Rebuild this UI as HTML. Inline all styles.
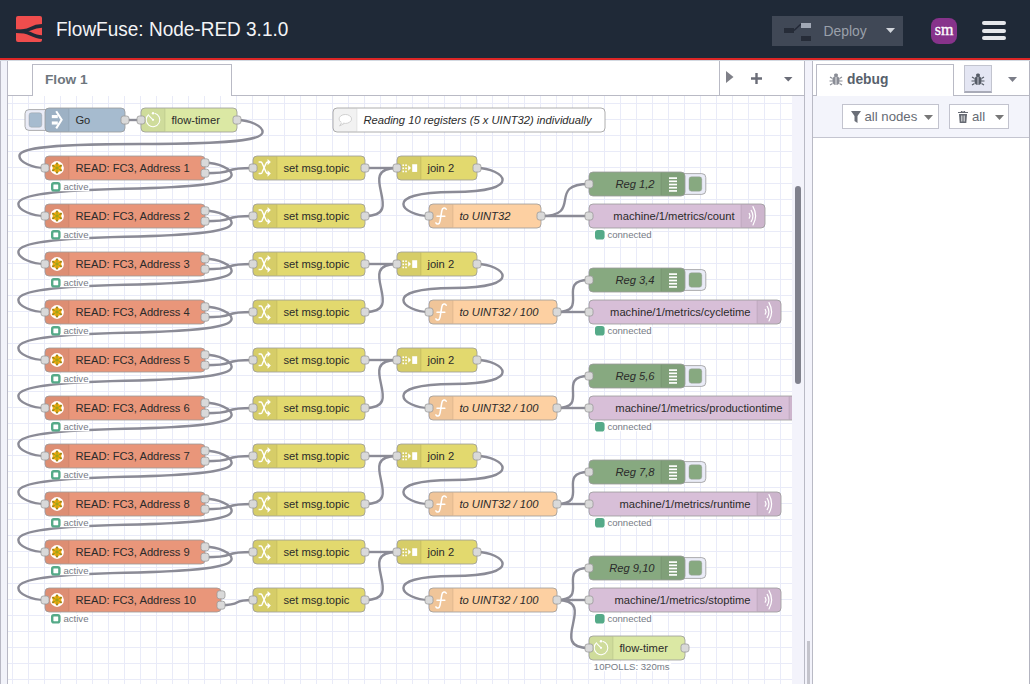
<!DOCTYPE html>
<html><head><meta charset="utf-8">
<style>
*{box-sizing:border-box;margin:0;padding:0}
html,body{width:1030px;height:684px;overflow:hidden;background:#fff;font-family:"Liberation Sans",sans-serif}
#hdr{position:absolute;left:0;top:0;width:1030px;height:58px;background:#1f2937}
#redline{position:absolute;left:0;top:58px;width:1030px;height:2px;background:#dc2626}
#title{position:absolute;left:56px;top:18px;font-size:19px;color:#f3f4f6;white-space:nowrap;letter-spacing:0;transform:scaleY(1.07);transform-origin:0 0}
#deploy{position:absolute;left:772px;top:16px;width:131px;height:30px;background:#404856}
#deploy .txt{position:absolute;left:51.5px;top:7px;font-size:13.9px;color:#9aa0aa}
#avatar{position:absolute;left:931px;top:18px;width:26px;height:26px;border-radius:8px;background:#87338b}
#avatar span{position:absolute;left:1px;top:3px;width:24px;text-align:center;font-family:"Liberation Serif",serif;font-size:16px;color:#fff;transform:scaleY(1.05);-webkit-text-stroke:0.3px #fff}
.bar{position:absolute;left:982px;width:24px;height:4px;border-radius:2px;background:#e5e7eb}
#lstrip{position:absolute;left:0;top:60px;width:8px;height:624px;background:#f2f3fa;border-left:1px solid #b8b8c4;border-right:1px solid #b8b8c4}
#tabbar{position:absolute;left:8px;top:60px;width:797px;height:36px;background:#fff;border-bottom:1px solid #b9bac5}
#tab1{position:absolute;left:32px;top:64px;width:200px;height:32px;background:#fff;border:1px solid #b9bac5;border-bottom:none}
#tab1 span{position:absolute;left:12px;top:6.5px;font-size:13.7px;font-weight:bold;color:#6d767d}
#tabctl{position:absolute;left:719px;top:60px;width:86px;height:36px;border-left:1px solid #b9bac5;border-right:1px solid #b9bac5;border-bottom:1px solid #b9bac5;background:#fff}
#sep{position:absolute;left:805px;top:60px;width:7px;height:624px;background:#f3f3fb}
#sbline{position:absolute;left:812px;top:60px;width:1px;height:624px;background:#b9bac5}
#sbline2{position:absolute;left:804px;top:96px;width:1px;height:588px;background:#b9bac5}
#sbhandle{position:absolute;left:807px;top:641px;width:3px;height:43px;background:#c4c4cc}
#sidebar{position:absolute;left:813px;top:60px;width:217px;height:624px;background:#fff}
#sbtabs{position:absolute;left:813px;top:60px;width:217px;height:36px;background:#fff;border-bottom:1px solid #b9bac5}
#dbgtab{position:absolute;left:816px;top:64px;width:138px;height:32px;background:#fff;border:1px solid #b9bac5;border-bottom:none}
#dbgtab span{position:absolute;left:30px;top:7.2px;font-size:13.8px;font-weight:bold;color:#58616c}
#dbgbtn{position:absolute;left:964px;top:65px;width:28px;height:28px;background:#e4e6f3;border:1px solid #c2c4cf;border-bottom:2px solid #a9abb8}
#sbtool{position:absolute;left:813px;top:96px;width:217px;height:42px;background:#f3f4fb;border-bottom:1px solid #c4c5d0}
.sbb{position:absolute;top:104px;height:25px;background:#fff;border:1px solid #c2c3ce}
.sbb span{position:absolute;top:4px;font-size:13.2px;color:#666b74}
#vtrack{position:absolute;left:792px;top:96px;width:12px;height:588px;background:#f3f3fb}
#vthumb{position:absolute;left:795px;top:186px;width:6px;height:198px;border-radius:3px;background:#80818d}
#canvas{position:absolute;left:0;top:0}
.lbl{font-family:"Liberation Sans",sans-serif;font-size:14px;fill:#2b2b2b}
.st{font-family:"Liberation Sans",sans-serif;font-size:12px;fill:#767b85}
.port{fill:#d9d9d9;stroke:#999;stroke-width:1}
</style></head><body>
<div id="hdr">
  <svg style="position:absolute;left:16px;top:16px" width="26" height="26" viewBox="0 0 26 26">
    <rect width="26" height="26" rx="2" fill="#ef4d4d"/>
    <path d="M0 15.3 C7 15.3 10 15 14 13 C18 11 21 9.9 26 9.9" fill="none" stroke="#1f2937" stroke-width="3.6"/>
    <path d="M0 15.3 C7 15.3 10 15.6 14 17.6 C18 19.6 21 21.1 26 21.1" fill="none" stroke="#1f2937" stroke-width="3.6"/>
  </svg>
  <div id="title">FlowFuse: Node-RED 3.1.0</div>
  <div id="deploy">
    <svg style="position:absolute;left:0;top:0" width="60" height="30">
      <rect x="12" y="12" width="10" height="5" fill="#262c38"/>
      <path d="M22 14.5 L29 8" stroke="#232937" stroke-width="1.5"/>
      <rect x="29" y="7" width="10" height="5" fill="#a1a8b5"/>
      <rect x="29" y="20" width="10" height="5" fill="#262c38"/>
    </svg>
    <div class="txt">Deploy</div>
    <svg style="position:absolute;left:114px;top:12px" width="10" height="6"><path d="M0 0 H9 L4.5 5 Z" fill="#d1d5db"/></svg>
  </div>
  <div id="avatar"><span>sm</span></div>
  <div class="bar" style="top:21px"></div>
  <div class="bar" style="top:28.5px"></div>
  <div class="bar" style="top:36px"></div>
</div>
<div id="redline"></div>
<div style="position:absolute;left:0;top:60px;width:1030px;height:1px;background:#d3d9e1;z-index:5"></div>
<div id="lstrip"></div>
<div id="tabbar"></div>
<div id="tab1"><span>Flow 1</span></div>
<div id="tabctl">
  <svg style="position:absolute;left:6px;top:11px" width="10" height="14"><path d="M0 0 L7.5 6 L0 12 Z" fill="#7f8088"/></svg>
  <svg style="position:absolute;left:30.5px;top:13px" width="12" height="12"><path d="M5.5 0 V11 M0 5.5 H11" stroke="#6b6d78" stroke-width="2.4"/></svg>
  <svg style="position:absolute;left:64px;top:17px" width="10" height="6"><path d="M0 0 H8.5 L4.25 4.5 Z" fill="#6b6d78"/></svg>
</div>
<svg id="canvas" width="1030" height="684" viewBox="0 0 1030 684" style="position:absolute;left:0;top:0">
  <defs><clipPath id="cc"><rect x="8" y="96" width="784" height="588"/></clipPath></defs>
  <g clip-path="url(#cc)"><rect x="8" y="96" width="784" height="588" fill="#fff"/><g fill="#e9ebf8"><rect x="12" y="96" width="1" height="588"/><rect x="28" y="96" width="1" height="588"/><rect x="44" y="96" width="1" height="588"/><rect x="60" y="96" width="1" height="588"/><rect x="76" y="96" width="1" height="588"/><rect x="92" y="96" width="1" height="588"/><rect x="108" y="96" width="1" height="588"/><rect x="124" y="96" width="1" height="588"/><rect x="140" y="96" width="1" height="588"/><rect x="156" y="96" width="1" height="588"/><rect x="172" y="96" width="1" height="588"/><rect x="188" y="96" width="1" height="588"/><rect x="204" y="96" width="1" height="588"/><rect x="220" y="96" width="1" height="588"/><rect x="236" y="96" width="1" height="588"/><rect x="252" y="96" width="1" height="588"/><rect x="268" y="96" width="1" height="588"/><rect x="284" y="96" width="1" height="588"/><rect x="300" y="96" width="1" height="588"/><rect x="316" y="96" width="1" height="588"/><rect x="332" y="96" width="1" height="588"/><rect x="348" y="96" width="1" height="588"/><rect x="364" y="96" width="1" height="588"/><rect x="380" y="96" width="1" height="588"/><rect x="396" y="96" width="1" height="588"/><rect x="412" y="96" width="1" height="588"/><rect x="428" y="96" width="1" height="588"/><rect x="444" y="96" width="1" height="588"/><rect x="460" y="96" width="1" height="588"/><rect x="476" y="96" width="1" height="588"/><rect x="492" y="96" width="1" height="588"/><rect x="508" y="96" width="1" height="588"/><rect x="524" y="96" width="1" height="588"/><rect x="540" y="96" width="1" height="588"/><rect x="556" y="96" width="1" height="588"/><rect x="572" y="96" width="1" height="588"/><rect x="588" y="96" width="1" height="588"/><rect x="604" y="96" width="1" height="588"/><rect x="620" y="96" width="1" height="588"/><rect x="636" y="96" width="1" height="588"/><rect x="652" y="96" width="1" height="588"/><rect x="668" y="96" width="1" height="588"/><rect x="684" y="96" width="1" height="588"/><rect x="700" y="96" width="1" height="588"/><rect x="716" y="96" width="1" height="588"/><rect x="732" y="96" width="1" height="588"/><rect x="748" y="96" width="1" height="588"/><rect x="764" y="96" width="1" height="588"/><rect x="780" y="96" width="1" height="588"/><rect x="8" y="103" width="784" height="1"/><rect x="8" y="119" width="784" height="1"/><rect x="8" y="135" width="784" height="1"/><rect x="8" y="151" width="784" height="1"/><rect x="8" y="167" width="784" height="1"/><rect x="8" y="183" width="784" height="1"/><rect x="8" y="199" width="784" height="1"/><rect x="8" y="215" width="784" height="1"/><rect x="8" y="231" width="784" height="1"/><rect x="8" y="247" width="784" height="1"/><rect x="8" y="263" width="784" height="1"/><rect x="8" y="279" width="784" height="1"/><rect x="8" y="295" width="784" height="1"/><rect x="8" y="311" width="784" height="1"/><rect x="8" y="327" width="784" height="1"/><rect x="8" y="343" width="784" height="1"/><rect x="8" y="359" width="784" height="1"/><rect x="8" y="375" width="784" height="1"/><rect x="8" y="391" width="784" height="1"/><rect x="8" y="407" width="784" height="1"/><rect x="8" y="423" width="784" height="1"/><rect x="8" y="439" width="784" height="1"/><rect x="8" y="455" width="784" height="1"/><rect x="8" y="471" width="784" height="1"/><rect x="8" y="487" width="784" height="1"/><rect x="8" y="503" width="784" height="1"/><rect x="8" y="519" width="784" height="1"/><rect x="8" y="535" width="784" height="1"/><rect x="8" y="551" width="784" height="1"/><rect x="8" y="567" width="784" height="1"/><rect x="8" y="583" width="784" height="1"/><rect x="8" y="599" width="784" height="1"/><rect x="8" y="615" width="784" height="1"/><rect x="8" y="631" width="784" height="1"/><rect x="8" y="647" width="784" height="1"/><rect x="8" y="663" width="784" height="1"/><rect x="8" y="679" width="784" height="1"/></g><g transform="translate(13,24) scale(0.8)"><g fill="none" stroke="#8b8b96" stroke-width="3"><path d="M 140 120 C 155 120 145 120 160 120"/><path d="M 280 120 C 296 120 312 127.5 312 135 S 296 150 160 150 S 8 157.5 8 165 S 24 180 40 180"/><path d="M 240 173.5 C 256.65 173.5 273.3 181 273.3 188.5 S 256.65 203.5 140 206 S 6.7 217.5 6.7 225 S 23.35 240 40 240"/><path d="M 240 186.5 C 285.26 186.5 254.74 180 300 180"/><path d="M 440 180 C 470 180 450 180 480 180"/><path d="M 240 233.5 C 256.65 233.5 273.3 241 273.3 248.5 S 256.65 263.5 140 266 S 6.7 277.5 6.7 285 S 23.35 300 40 300"/><path d="M 240 246.5 C 285.26 246.5 254.74 240 300 240"/><path d="M 440 240 C 494.08 240 425.92 180 480 180"/><path d="M 240 293.5 C 256.65 293.5 273.3 301 273.3 308.5 S 256.65 323.5 140 326 S 6.7 337.5 6.7 345 S 23.35 360 40 360"/><path d="M 240 306.5 C 285.26 306.5 254.74 300 300 300"/><path d="M 440 300 C 470 300 450 300 480 300"/><path d="M 240 353.5 C 256.65 353.5 273.3 361 273.3 368.5 S 256.65 383.5 140 386 S 6.7 397.5 6.7 405 S 23.35 420 40 420"/><path d="M 240 366.5 C 285.26 366.5 254.74 360 300 360"/><path d="M 440 360 C 494.08 360 425.92 300 480 300"/><path d="M 240 413.5 C 256.65 413.5 273.3 421 273.3 428.5 S 256.65 443.5 140 446 S 6.7 457.5 6.7 465 S 23.35 480 40 480"/><path d="M 240 426.5 C 285.26 426.5 254.74 420 300 420"/><path d="M 440 420 C 470 420 450 420 480 420"/><path d="M 240 473.5 C 256.65 473.5 273.3 481 273.3 488.5 S 256.65 503.5 140 506 S 6.7 517.5 6.7 525 S 23.35 540 40 540"/><path d="M 240 486.5 C 285.26 486.5 254.74 480 300 480"/><path d="M 440 480 C 494.08 480 425.92 420 480 420"/><path d="M 240 533.5 C 256.65 533.5 273.3 541 273.3 548.5 S 256.65 563.5 140 566 S 6.7 577.5 6.7 585 S 23.35 600 40 600"/><path d="M 240 546.5 C 285.26 546.5 254.74 540 300 540"/><path d="M 440 540 C 470 540 450 540 480 540"/><path d="M 240 593.5 C 256.65 593.5 273.3 601 273.3 608.5 S 256.65 623.5 140 626 S 6.7 637.5 6.7 645 S 23.35 660 40 660"/><path d="M 240 606.5 C 285.26 606.5 254.74 600 300 600"/><path d="M 440 600 C 494.08 600 425.92 540 480 540"/><path d="M 240 653.5 C 256.65 653.5 273.3 661 273.3 668.5 S 256.65 683.5 140 686 S 6.7 697.5 6.7 705 S 23.35 720 40 720"/><path d="M 240 666.5 C 285.26 666.5 254.74 660 300 660"/><path d="M 440 660 C 470 660 450 660 480 660"/><path d="M 260 726.5 C 290.39 726.5 269.61 720 300 720"/><path d="M 440 720 C 494.08 720 425.92 660 480 660"/><path d="M 580 180 C 596 180 612 187.5 612 195 S 596 210 550 210 S 488 217.5 488 225 S 504 240 520 240"/><path d="M 660 240 C 714.08 240 665.92 200 720 200"/><path d="M 660 240 C 705 240 675 240 720 240"/><path d="M 580 300 C 596 300 612 307.5 612 315 S 596 330 550 330 S 488 337.5 488 345 S 504 360 520 360"/><path d="M 680 360 C 722.43 360 677.57 320 720 320"/><path d="M 680 360 C 710 360 690 360 720 360"/><path d="M 580 420 C 596 420 612 427.5 612 435 S 596 450 550 450 S 488 457.5 488 465 S 504 480 520 480"/><path d="M 680 480 C 722.43 480 677.57 440 720 440"/><path d="M 680 480 C 710 480 690 480 720 480"/><path d="M 580 540 C 596 540 612 547.5 612 555 S 596 570 550 570 S 488 577.5 488 585 S 504 600 520 600"/><path d="M 680 600 C 722.43 600 677.57 560 720 560"/><path d="M 680 600 C 710 600 690 600 720 600"/><path d="M 580 660 C 596 660 612 667.5 612 675 S 596 690 550 690 S 488 697.5 488 705 S 504 720 520 720"/><path d="M 680 720 C 722.43 720 677.57 680 720 680"/><path d="M 680 720 C 710 720 690 720 720 720"/><path d="M 680 720 C 734.08 720 665.92 780 720 780"/></g><g transform="translate(40,105)"><g transform="translate(-25,2)"><rect width="32" height="26" rx="5" ry="5" fill="#eaecf7" stroke="#999"/><rect x="5" y="4" width="16" height="18" rx="3" ry="3" fill="#a6bbcf" stroke="#999" stroke-opacity="0.5"/></g><rect width="100" height="30" rx="5" ry="5" fill="#a6bbcf" stroke="#999"/><path d="M5 0.5 H30 V29.5 H5 A4.5 4.5 0 0 1 0.5 25 V5 A4.5 4.5 0 0 1 5 0.5 Z" fill="#000" fill-opacity="0.05"/><path d="M30 1 V29" stroke="#000" stroke-opacity="0.1"/><g fill="#fff"><rect x="8.5" y="8.8" width="7.5" height="3.9"/><rect x="8.5" y="16.8" width="7.5" height="3.9"/><path d="M14 4 L20.8 14.75 L14 25.5" fill="none" stroke="#fff" stroke-width="2.6" stroke-linejoin="miter"/></g><text x="38" y="20.4" text-anchor="start" class="lbl">Go</text><rect x="95" y="10" width="10" height="10" rx="3" ry="3" class="port"/></g><g transform="translate(160,105)"><rect width="120" height="30" rx="5" ry="5" fill="#dbe8a4" stroke="#999"/><path d="M5 0.5 H30 V29.5 H5 A4.5 4.5 0 0 1 0.5 25 V5 A4.5 4.5 0 0 1 5 0.5 Z" fill="#000" fill-opacity="0.05"/><path d="M30 1 V29" stroke="#000" stroke-opacity="0.1"/><g fill="none" stroke="#fff" stroke-width="1.3"><path d="M17.06 6.55 A8.5 8.5 0 1 1 9.77 8.1"/><path d="M15 14.8 L9.6 9.2" stroke-width="1.3"/></g><circle cx="15" cy="6.5" r="1.5" fill="#fff"/><circle cx="15" cy="14.8" r="1.4" fill="#fff"/><text x="38" y="20.4" text-anchor="start" class="lbl">flow-timer</text><rect x="-5" y="10" width="10" height="10" rx="3" ry="3" class="port"/><rect x="115" y="10" width="10" height="10" rx="3" ry="3" class="port"/></g><g transform="translate(400,105)"><rect width="340" height="30" rx="5" ry="5" fill="#ffffff" stroke="#999"/><path d="M5 0.5 H30 V29.5 H5 A4.5 4.5 0 0 1 0.5 25 V5 A4.5 4.5 0 0 1 5 0.5 Z" fill="#000" fill-opacity="0.05"/><path d="M30 1 V29" stroke="#000" stroke-opacity="0.1"/><g fill="#fff" stroke="#cfcfcf" stroke-width="1.2"><path d="M11 18.3 L8.2 22.5 L14 19.4"/><ellipse cx="15.4" cy="13.7" rx="7.8" ry="5.6"/><path d="M10.6 17.6 L12.6 18.6" stroke="#fff" stroke-width="1.6"/></g><text x="38" y="20.4" text-anchor="start" class="lbl" font-style="italic">Reading 10 registers (5 x UINT32) individually</text></g><g transform="translate(40,165)"><rect width="200" height="30" rx="5" ry="5" fill="#e9967a" stroke="#999"/><path d="M5 0.5 H30 V29.5 H5 A4.5 4.5 0 0 1 0.5 25 V5 A4.5 4.5 0 0 1 5 0.5 Z" fill="#000" fill-opacity="0.05"/><path d="M30 1 V29" stroke="#000" stroke-opacity="0.1"/><circle cx="15" cy="15" r="8.6" fill="#fff"/><polygon points="15,7.7 17.6,10.5 21.32,11.35 20.2,15 21.32,18.65 17.6,19.5 15,22.3 12.4,19.5 8.68,18.65 9.8,15 8.68,11.35 12.4,10.5" fill="#f5a80e"/><g stroke="#98a418" stroke-width="1.2"><line x1="15" y1="9" x2="15" y2="21"/><line x1="20.2" y1="12" x2="9.8" y2="18"/><line x1="20.2" y1="18" x2="9.8" y2="12"/></g><circle cx="15" cy="9.3" r="0.95" fill="#4f8f2e" stroke="#d0701a" stroke-width="0.4"/><circle cx="19.94" cy="12.15" r="0.95" fill="#4f8f2e" stroke="#d0701a" stroke-width="0.4"/><circle cx="19.94" cy="17.85" r="0.95" fill="#4f8f2e" stroke="#d0701a" stroke-width="0.4"/><circle cx="15" cy="20.7" r="0.95" fill="#4f8f2e" stroke="#d0701a" stroke-width="0.4"/><circle cx="10.06" cy="17.85" r="0.95" fill="#4f8f2e" stroke="#d0701a" stroke-width="0.4"/><circle cx="10.06" cy="12.15" r="0.95" fill="#4f8f2e" stroke="#d0701a" stroke-width="0.4"/><text x="38" y="20.4" text-anchor="start" class="lbl">READ: FC3, Address 1</text><rect x="-5" y="10" width="10" height="10" rx="3" ry="3" class="port"/><rect x="195" y="3.5" width="10" height="10" rx="3" ry="3" class="port"/><rect x="195" y="16.5" width="10" height="10" rx="3" ry="3" class="port"/><g transform="translate(3,33)"><rect x="3" y="-1" width="49.35" height="12" fill="#fff"/><rect x="6" y="1" width="9" height="9" rx="2" ry="2" fill="#fff" stroke="#55aa88" stroke-width="3"/><text x="20" y="10" class="st">active</text></g></g><g transform="translate(300,165)"><rect width="140" height="30" rx="5" ry="5" fill="#e2d96e" stroke="#999"/><path d="M5 0.5 H30 V29.5 H5 A4.5 4.5 0 0 1 0.5 25 V5 A4.5 4.5 0 0 1 5 0.5 Z" fill="#000" fill-opacity="0.05"/><path d="M30 1 V29" stroke="#000" stroke-opacity="0.1"/><g fill="none" stroke="#fff" stroke-width="1.8"><path d="M7 7.6 H9.6 C10.5 7.6 10.9 8 11.3 8.8 L16.2 20 C16.7 21.3 17.3 21.9 18.8 21.9"/><path d="M7 21.9 H9.6 C10.5 21.9 10.9 21.5 11.3 20.7 L16.2 9.5 C16.7 8.2 17.3 7.6 18.8 7.6"/></g><g fill="#fff"><path d="M18.2 3.6 L22.3 7.6 L18.2 11.6 Z"/><path d="M18.2 17.9 L22.3 21.9 L18.2 25.9 Z"/></g><text x="38" y="20.4" text-anchor="start" class="lbl">set msg.topic</text><rect x="-5" y="10" width="10" height="10" rx="3" ry="3" class="port"/><rect x="135" y="10" width="10" height="10" rx="3" ry="3" class="port"/></g><g transform="translate(480,165)"><rect width="100" height="30" rx="5" ry="5" fill="#e2d96e" stroke="#999"/><path d="M5 0.5 H30 V29.5 H5 A4.5 4.5 0 0 1 0.5 25 V5 A4.5 4.5 0 0 1 5 0.5 Z" fill="#000" fill-opacity="0.05"/><path d="M30 1 V29" stroke="#000" stroke-opacity="0.1"/><g fill="#fff"><rect x="6.8" y="10.5" width="2" height="2"/><rect x="6.8" y="14.4" width="2" height="2"/><rect x="6.8" y="18.3" width="2" height="2"/><rect x="10.3" y="10.5" width="2" height="2"/><rect x="10.3" y="14.4" width="2" height="2"/><rect x="10.3" y="18.3" width="2" height="2"/><path d="M14 11.5 L17.5 15 L14 18.5 Z"/><rect x="19" y="10.3" width="6.2" height="9.6"/></g><text x="38" y="20.4" text-anchor="start" class="lbl">join 2</text><rect x="-5" y="10" width="10" height="10" rx="3" ry="3" class="port"/><rect x="95" y="10" width="10" height="10" rx="3" ry="3" class="port"/></g><g transform="translate(40,225)"><rect width="200" height="30" rx="5" ry="5" fill="#e9967a" stroke="#999"/><path d="M5 0.5 H30 V29.5 H5 A4.5 4.5 0 0 1 0.5 25 V5 A4.5 4.5 0 0 1 5 0.5 Z" fill="#000" fill-opacity="0.05"/><path d="M30 1 V29" stroke="#000" stroke-opacity="0.1"/><circle cx="15" cy="15" r="8.6" fill="#fff"/><polygon points="15,7.7 17.6,10.5 21.32,11.35 20.2,15 21.32,18.65 17.6,19.5 15,22.3 12.4,19.5 8.68,18.65 9.8,15 8.68,11.35 12.4,10.5" fill="#f5a80e"/><g stroke="#98a418" stroke-width="1.2"><line x1="15" y1="9" x2="15" y2="21"/><line x1="20.2" y1="12" x2="9.8" y2="18"/><line x1="20.2" y1="18" x2="9.8" y2="12"/></g><circle cx="15" cy="9.3" r="0.95" fill="#4f8f2e" stroke="#d0701a" stroke-width="0.4"/><circle cx="19.94" cy="12.15" r="0.95" fill="#4f8f2e" stroke="#d0701a" stroke-width="0.4"/><circle cx="19.94" cy="17.85" r="0.95" fill="#4f8f2e" stroke="#d0701a" stroke-width="0.4"/><circle cx="15" cy="20.7" r="0.95" fill="#4f8f2e" stroke="#d0701a" stroke-width="0.4"/><circle cx="10.06" cy="17.85" r="0.95" fill="#4f8f2e" stroke="#d0701a" stroke-width="0.4"/><circle cx="10.06" cy="12.15" r="0.95" fill="#4f8f2e" stroke="#d0701a" stroke-width="0.4"/><text x="38" y="20.4" text-anchor="start" class="lbl">READ: FC3, Address 2</text><rect x="-5" y="10" width="10" height="10" rx="3" ry="3" class="port"/><rect x="195" y="3.5" width="10" height="10" rx="3" ry="3" class="port"/><rect x="195" y="16.5" width="10" height="10" rx="3" ry="3" class="port"/><g transform="translate(3,33)"><rect x="3" y="-1" width="49.35" height="12" fill="#fff"/><rect x="6" y="1" width="9" height="9" rx="2" ry="2" fill="#fff" stroke="#55aa88" stroke-width="3"/><text x="20" y="10" class="st">active</text></g></g><g transform="translate(300,225)"><rect width="140" height="30" rx="5" ry="5" fill="#e2d96e" stroke="#999"/><path d="M5 0.5 H30 V29.5 H5 A4.5 4.5 0 0 1 0.5 25 V5 A4.5 4.5 0 0 1 5 0.5 Z" fill="#000" fill-opacity="0.05"/><path d="M30 1 V29" stroke="#000" stroke-opacity="0.1"/><g fill="none" stroke="#fff" stroke-width="1.8"><path d="M7 7.6 H9.6 C10.5 7.6 10.9 8 11.3 8.8 L16.2 20 C16.7 21.3 17.3 21.9 18.8 21.9"/><path d="M7 21.9 H9.6 C10.5 21.9 10.9 21.5 11.3 20.7 L16.2 9.5 C16.7 8.2 17.3 7.6 18.8 7.6"/></g><g fill="#fff"><path d="M18.2 3.6 L22.3 7.6 L18.2 11.6 Z"/><path d="M18.2 17.9 L22.3 21.9 L18.2 25.9 Z"/></g><text x="38" y="20.4" text-anchor="start" class="lbl">set msg.topic</text><rect x="-5" y="10" width="10" height="10" rx="3" ry="3" class="port"/><rect x="135" y="10" width="10" height="10" rx="3" ry="3" class="port"/></g><g transform="translate(520,225)"><rect width="140" height="30" rx="5" ry="5" fill="#fdd0a2" stroke="#999"/><path d="M5 0.5 H30 V29.5 H5 A4.5 4.5 0 0 1 0.5 25 V5 A4.5 4.5 0 0 1 5 0.5 Z" fill="#000" fill-opacity="0.05"/><path d="M30 1 V29" stroke="#000" stroke-opacity="0.1"/><g fill="none" stroke="#fff" stroke-width="1.9" stroke-linecap="round"><path d="M21.5 6.5 C20.5 4.2 16.6 4.2 16 8.5 L13.8 21.5 C13.2 25.8 9.8 25.8 8.6 23.5"/><path d="M10 15.2 H19.8"/></g><text x="38" y="20.4" text-anchor="start" class="lbl" font-style="italic">to UINT32</text><rect x="-5" y="10" width="10" height="10" rx="3" ry="3" class="port"/><rect x="135" y="10" width="10" height="10" rx="3" ry="3" class="port"/></g><g transform="translate(720,185)"><g transform="translate(114,2)"><rect width="32" height="26" rx="5" ry="5" fill="#eaecf7" stroke="#999"/><rect x="11" y="4" width="16" height="18" rx="3" ry="3" fill="#87a980" stroke="#999" stroke-opacity="0.5"/></g><rect width="120" height="30" rx="5" ry="5" fill="#87a980" stroke="#999"/><path d="M90 0.5 H115 A4.5 4.5 0 0 1 119.5 5 V25 A4.5 4.5 0 0 1 115 29.5 H90 Z" fill="#000" fill-opacity="0.05"/><path d="M90 1 V29" stroke="#000" stroke-opacity="0.1"/><g transform="translate(90,0)"><g fill="#fff"><rect x="10" y="6.6" width="10" height="2.1"/><rect x="10" y="10.6" width="10" height="2.1"/><rect x="10" y="14.6" width="10" height="2.1"/><rect x="10" y="18.6" width="10" height="2.1"/><rect x="10" y="22.6" width="10" height="2.1"/></g></g><text x="82" y="20.4" text-anchor="end" class="lbl" font-style="italic">Reg 1,2</text><rect x="-5" y="10" width="10" height="10" rx="3" ry="3" class="port"/></g><g transform="translate(720,225)"><rect width="220" height="30" rx="5" ry="5" fill="#d8bfd8" stroke="#999"/><path d="M190 0.5 H215 A4.5 4.5 0 0 1 219.5 5 V25 A4.5 4.5 0 0 1 215 29.5 H190 Z" fill="#000" fill-opacity="0.05"/><path d="M190 1 V29" stroke="#000" stroke-opacity="0.1"/><g transform="translate(190,0)"><g fill="none" stroke="#fff" stroke-width="1.5" stroke-linecap="round"><path d="M10.3 11.8 Q12.2 14.75 10.3 17.7"/><path d="M12.7 8 Q17.1 15 12.7 22"/><path d="M15 3.3 Q21.5 14.75 15 26.2"/></g></g><text x="182" y="20.4" text-anchor="end" class="lbl">machine/1/metrics/count</text><rect x="-5" y="10" width="10" height="10" rx="3" ry="3" class="port"/><g transform="translate(3,33)"><rect x="3" y="-1" width="73.38" height="12" fill="#fff"/><rect x="6" y="1" width="9" height="9" rx="2" ry="2" fill="#55aa88" stroke="#55aa88" stroke-width="3"/><text x="20" y="10" class="st">connected</text></g></g><g transform="translate(40,285)"><rect width="200" height="30" rx="5" ry="5" fill="#e9967a" stroke="#999"/><path d="M5 0.5 H30 V29.5 H5 A4.5 4.5 0 0 1 0.5 25 V5 A4.5 4.5 0 0 1 5 0.5 Z" fill="#000" fill-opacity="0.05"/><path d="M30 1 V29" stroke="#000" stroke-opacity="0.1"/><circle cx="15" cy="15" r="8.6" fill="#fff"/><polygon points="15,7.7 17.6,10.5 21.32,11.35 20.2,15 21.32,18.65 17.6,19.5 15,22.3 12.4,19.5 8.68,18.65 9.8,15 8.68,11.35 12.4,10.5" fill="#f5a80e"/><g stroke="#98a418" stroke-width="1.2"><line x1="15" y1="9" x2="15" y2="21"/><line x1="20.2" y1="12" x2="9.8" y2="18"/><line x1="20.2" y1="18" x2="9.8" y2="12"/></g><circle cx="15" cy="9.3" r="0.95" fill="#4f8f2e" stroke="#d0701a" stroke-width="0.4"/><circle cx="19.94" cy="12.15" r="0.95" fill="#4f8f2e" stroke="#d0701a" stroke-width="0.4"/><circle cx="19.94" cy="17.85" r="0.95" fill="#4f8f2e" stroke="#d0701a" stroke-width="0.4"/><circle cx="15" cy="20.7" r="0.95" fill="#4f8f2e" stroke="#d0701a" stroke-width="0.4"/><circle cx="10.06" cy="17.85" r="0.95" fill="#4f8f2e" stroke="#d0701a" stroke-width="0.4"/><circle cx="10.06" cy="12.15" r="0.95" fill="#4f8f2e" stroke="#d0701a" stroke-width="0.4"/><text x="38" y="20.4" text-anchor="start" class="lbl">READ: FC3, Address 3</text><rect x="-5" y="10" width="10" height="10" rx="3" ry="3" class="port"/><rect x="195" y="3.5" width="10" height="10" rx="3" ry="3" class="port"/><rect x="195" y="16.5" width="10" height="10" rx="3" ry="3" class="port"/><g transform="translate(3,33)"><rect x="3" y="-1" width="49.35" height="12" fill="#fff"/><rect x="6" y="1" width="9" height="9" rx="2" ry="2" fill="#fff" stroke="#55aa88" stroke-width="3"/><text x="20" y="10" class="st">active</text></g></g><g transform="translate(300,285)"><rect width="140" height="30" rx="5" ry="5" fill="#e2d96e" stroke="#999"/><path d="M5 0.5 H30 V29.5 H5 A4.5 4.5 0 0 1 0.5 25 V5 A4.5 4.5 0 0 1 5 0.5 Z" fill="#000" fill-opacity="0.05"/><path d="M30 1 V29" stroke="#000" stroke-opacity="0.1"/><g fill="none" stroke="#fff" stroke-width="1.8"><path d="M7 7.6 H9.6 C10.5 7.6 10.9 8 11.3 8.8 L16.2 20 C16.7 21.3 17.3 21.9 18.8 21.9"/><path d="M7 21.9 H9.6 C10.5 21.9 10.9 21.5 11.3 20.7 L16.2 9.5 C16.7 8.2 17.3 7.6 18.8 7.6"/></g><g fill="#fff"><path d="M18.2 3.6 L22.3 7.6 L18.2 11.6 Z"/><path d="M18.2 17.9 L22.3 21.9 L18.2 25.9 Z"/></g><text x="38" y="20.4" text-anchor="start" class="lbl">set msg.topic</text><rect x="-5" y="10" width="10" height="10" rx="3" ry="3" class="port"/><rect x="135" y="10" width="10" height="10" rx="3" ry="3" class="port"/></g><g transform="translate(480,285)"><rect width="100" height="30" rx="5" ry="5" fill="#e2d96e" stroke="#999"/><path d="M5 0.5 H30 V29.5 H5 A4.5 4.5 0 0 1 0.5 25 V5 A4.5 4.5 0 0 1 5 0.5 Z" fill="#000" fill-opacity="0.05"/><path d="M30 1 V29" stroke="#000" stroke-opacity="0.1"/><g fill="#fff"><rect x="6.8" y="10.5" width="2" height="2"/><rect x="6.8" y="14.4" width="2" height="2"/><rect x="6.8" y="18.3" width="2" height="2"/><rect x="10.3" y="10.5" width="2" height="2"/><rect x="10.3" y="14.4" width="2" height="2"/><rect x="10.3" y="18.3" width="2" height="2"/><path d="M14 11.5 L17.5 15 L14 18.5 Z"/><rect x="19" y="10.3" width="6.2" height="9.6"/></g><text x="38" y="20.4" text-anchor="start" class="lbl">join 2</text><rect x="-5" y="10" width="10" height="10" rx="3" ry="3" class="port"/><rect x="95" y="10" width="10" height="10" rx="3" ry="3" class="port"/></g><g transform="translate(40,345)"><rect width="200" height="30" rx="5" ry="5" fill="#e9967a" stroke="#999"/><path d="M5 0.5 H30 V29.5 H5 A4.5 4.5 0 0 1 0.5 25 V5 A4.5 4.5 0 0 1 5 0.5 Z" fill="#000" fill-opacity="0.05"/><path d="M30 1 V29" stroke="#000" stroke-opacity="0.1"/><circle cx="15" cy="15" r="8.6" fill="#fff"/><polygon points="15,7.7 17.6,10.5 21.32,11.35 20.2,15 21.32,18.65 17.6,19.5 15,22.3 12.4,19.5 8.68,18.65 9.8,15 8.68,11.35 12.4,10.5" fill="#f5a80e"/><g stroke="#98a418" stroke-width="1.2"><line x1="15" y1="9" x2="15" y2="21"/><line x1="20.2" y1="12" x2="9.8" y2="18"/><line x1="20.2" y1="18" x2="9.8" y2="12"/></g><circle cx="15" cy="9.3" r="0.95" fill="#4f8f2e" stroke="#d0701a" stroke-width="0.4"/><circle cx="19.94" cy="12.15" r="0.95" fill="#4f8f2e" stroke="#d0701a" stroke-width="0.4"/><circle cx="19.94" cy="17.85" r="0.95" fill="#4f8f2e" stroke="#d0701a" stroke-width="0.4"/><circle cx="15" cy="20.7" r="0.95" fill="#4f8f2e" stroke="#d0701a" stroke-width="0.4"/><circle cx="10.06" cy="17.85" r="0.95" fill="#4f8f2e" stroke="#d0701a" stroke-width="0.4"/><circle cx="10.06" cy="12.15" r="0.95" fill="#4f8f2e" stroke="#d0701a" stroke-width="0.4"/><text x="38" y="20.4" text-anchor="start" class="lbl">READ: FC3, Address 4</text><rect x="-5" y="10" width="10" height="10" rx="3" ry="3" class="port"/><rect x="195" y="3.5" width="10" height="10" rx="3" ry="3" class="port"/><rect x="195" y="16.5" width="10" height="10" rx="3" ry="3" class="port"/><g transform="translate(3,33)"><rect x="3" y="-1" width="49.35" height="12" fill="#fff"/><rect x="6" y="1" width="9" height="9" rx="2" ry="2" fill="#fff" stroke="#55aa88" stroke-width="3"/><text x="20" y="10" class="st">active</text></g></g><g transform="translate(300,345)"><rect width="140" height="30" rx="5" ry="5" fill="#e2d96e" stroke="#999"/><path d="M5 0.5 H30 V29.5 H5 A4.5 4.5 0 0 1 0.5 25 V5 A4.5 4.5 0 0 1 5 0.5 Z" fill="#000" fill-opacity="0.05"/><path d="M30 1 V29" stroke="#000" stroke-opacity="0.1"/><g fill="none" stroke="#fff" stroke-width="1.8"><path d="M7 7.6 H9.6 C10.5 7.6 10.9 8 11.3 8.8 L16.2 20 C16.7 21.3 17.3 21.9 18.8 21.9"/><path d="M7 21.9 H9.6 C10.5 21.9 10.9 21.5 11.3 20.7 L16.2 9.5 C16.7 8.2 17.3 7.6 18.8 7.6"/></g><g fill="#fff"><path d="M18.2 3.6 L22.3 7.6 L18.2 11.6 Z"/><path d="M18.2 17.9 L22.3 21.9 L18.2 25.9 Z"/></g><text x="38" y="20.4" text-anchor="start" class="lbl">set msg.topic</text><rect x="-5" y="10" width="10" height="10" rx="3" ry="3" class="port"/><rect x="135" y="10" width="10" height="10" rx="3" ry="3" class="port"/></g><g transform="translate(520,345)"><rect width="160" height="30" rx="5" ry="5" fill="#fdd0a2" stroke="#999"/><path d="M5 0.5 H30 V29.5 H5 A4.5 4.5 0 0 1 0.5 25 V5 A4.5 4.5 0 0 1 5 0.5 Z" fill="#000" fill-opacity="0.05"/><path d="M30 1 V29" stroke="#000" stroke-opacity="0.1"/><g fill="none" stroke="#fff" stroke-width="1.9" stroke-linecap="round"><path d="M21.5 6.5 C20.5 4.2 16.6 4.2 16 8.5 L13.8 21.5 C13.2 25.8 9.8 25.8 8.6 23.5"/><path d="M10 15.2 H19.8"/></g><text x="38" y="20.4" text-anchor="start" class="lbl" font-style="italic">to UINT32 / 100</text><rect x="-5" y="10" width="10" height="10" rx="3" ry="3" class="port"/><rect x="155" y="10" width="10" height="10" rx="3" ry="3" class="port"/></g><g transform="translate(720,305)"><g transform="translate(114,2)"><rect width="32" height="26" rx="5" ry="5" fill="#eaecf7" stroke="#999"/><rect x="11" y="4" width="16" height="18" rx="3" ry="3" fill="#87a980" stroke="#999" stroke-opacity="0.5"/></g><rect width="120" height="30" rx="5" ry="5" fill="#87a980" stroke="#999"/><path d="M90 0.5 H115 A4.5 4.5 0 0 1 119.5 5 V25 A4.5 4.5 0 0 1 115 29.5 H90 Z" fill="#000" fill-opacity="0.05"/><path d="M90 1 V29" stroke="#000" stroke-opacity="0.1"/><g transform="translate(90,0)"><g fill="#fff"><rect x="10" y="6.6" width="10" height="2.1"/><rect x="10" y="10.6" width="10" height="2.1"/><rect x="10" y="14.6" width="10" height="2.1"/><rect x="10" y="18.6" width="10" height="2.1"/><rect x="10" y="22.6" width="10" height="2.1"/></g></g><text x="82" y="20.4" text-anchor="end" class="lbl" font-style="italic">Reg 3,4</text><rect x="-5" y="10" width="10" height="10" rx="3" ry="3" class="port"/></g><g transform="translate(720,345)"><rect width="240" height="30" rx="5" ry="5" fill="#d8bfd8" stroke="#999"/><path d="M210 0.5 H235 A4.5 4.5 0 0 1 239.5 5 V25 A4.5 4.5 0 0 1 235 29.5 H210 Z" fill="#000" fill-opacity="0.05"/><path d="M210 1 V29" stroke="#000" stroke-opacity="0.1"/><g transform="translate(210,0)"><g fill="none" stroke="#fff" stroke-width="1.5" stroke-linecap="round"><path d="M10.3 11.8 Q12.2 14.75 10.3 17.7"/><path d="M12.7 8 Q17.1 15 12.7 22"/><path d="M15 3.3 Q21.5 14.75 15 26.2"/></g></g><text x="202" y="20.4" text-anchor="end" class="lbl">machine/1/metrics/cycletime</text><rect x="-5" y="10" width="10" height="10" rx="3" ry="3" class="port"/><g transform="translate(3,33)"><rect x="3" y="-1" width="73.38" height="12" fill="#fff"/><rect x="6" y="1" width="9" height="9" rx="2" ry="2" fill="#55aa88" stroke="#55aa88" stroke-width="3"/><text x="20" y="10" class="st">connected</text></g></g><g transform="translate(40,405)"><rect width="200" height="30" rx="5" ry="5" fill="#e9967a" stroke="#999"/><path d="M5 0.5 H30 V29.5 H5 A4.5 4.5 0 0 1 0.5 25 V5 A4.5 4.5 0 0 1 5 0.5 Z" fill="#000" fill-opacity="0.05"/><path d="M30 1 V29" stroke="#000" stroke-opacity="0.1"/><circle cx="15" cy="15" r="8.6" fill="#fff"/><polygon points="15,7.7 17.6,10.5 21.32,11.35 20.2,15 21.32,18.65 17.6,19.5 15,22.3 12.4,19.5 8.68,18.65 9.8,15 8.68,11.35 12.4,10.5" fill="#f5a80e"/><g stroke="#98a418" stroke-width="1.2"><line x1="15" y1="9" x2="15" y2="21"/><line x1="20.2" y1="12" x2="9.8" y2="18"/><line x1="20.2" y1="18" x2="9.8" y2="12"/></g><circle cx="15" cy="9.3" r="0.95" fill="#4f8f2e" stroke="#d0701a" stroke-width="0.4"/><circle cx="19.94" cy="12.15" r="0.95" fill="#4f8f2e" stroke="#d0701a" stroke-width="0.4"/><circle cx="19.94" cy="17.85" r="0.95" fill="#4f8f2e" stroke="#d0701a" stroke-width="0.4"/><circle cx="15" cy="20.7" r="0.95" fill="#4f8f2e" stroke="#d0701a" stroke-width="0.4"/><circle cx="10.06" cy="17.85" r="0.95" fill="#4f8f2e" stroke="#d0701a" stroke-width="0.4"/><circle cx="10.06" cy="12.15" r="0.95" fill="#4f8f2e" stroke="#d0701a" stroke-width="0.4"/><text x="38" y="20.4" text-anchor="start" class="lbl">READ: FC3, Address 5</text><rect x="-5" y="10" width="10" height="10" rx="3" ry="3" class="port"/><rect x="195" y="3.5" width="10" height="10" rx="3" ry="3" class="port"/><rect x="195" y="16.5" width="10" height="10" rx="3" ry="3" class="port"/><g transform="translate(3,33)"><rect x="3" y="-1" width="49.35" height="12" fill="#fff"/><rect x="6" y="1" width="9" height="9" rx="2" ry="2" fill="#fff" stroke="#55aa88" stroke-width="3"/><text x="20" y="10" class="st">active</text></g></g><g transform="translate(300,405)"><rect width="140" height="30" rx="5" ry="5" fill="#e2d96e" stroke="#999"/><path d="M5 0.5 H30 V29.5 H5 A4.5 4.5 0 0 1 0.5 25 V5 A4.5 4.5 0 0 1 5 0.5 Z" fill="#000" fill-opacity="0.05"/><path d="M30 1 V29" stroke="#000" stroke-opacity="0.1"/><g fill="none" stroke="#fff" stroke-width="1.8"><path d="M7 7.6 H9.6 C10.5 7.6 10.9 8 11.3 8.8 L16.2 20 C16.7 21.3 17.3 21.9 18.8 21.9"/><path d="M7 21.9 H9.6 C10.5 21.9 10.9 21.5 11.3 20.7 L16.2 9.5 C16.7 8.2 17.3 7.6 18.8 7.6"/></g><g fill="#fff"><path d="M18.2 3.6 L22.3 7.6 L18.2 11.6 Z"/><path d="M18.2 17.9 L22.3 21.9 L18.2 25.9 Z"/></g><text x="38" y="20.4" text-anchor="start" class="lbl">set msg.topic</text><rect x="-5" y="10" width="10" height="10" rx="3" ry="3" class="port"/><rect x="135" y="10" width="10" height="10" rx="3" ry="3" class="port"/></g><g transform="translate(480,405)"><rect width="100" height="30" rx="5" ry="5" fill="#e2d96e" stroke="#999"/><path d="M5 0.5 H30 V29.5 H5 A4.5 4.5 0 0 1 0.5 25 V5 A4.5 4.5 0 0 1 5 0.5 Z" fill="#000" fill-opacity="0.05"/><path d="M30 1 V29" stroke="#000" stroke-opacity="0.1"/><g fill="#fff"><rect x="6.8" y="10.5" width="2" height="2"/><rect x="6.8" y="14.4" width="2" height="2"/><rect x="6.8" y="18.3" width="2" height="2"/><rect x="10.3" y="10.5" width="2" height="2"/><rect x="10.3" y="14.4" width="2" height="2"/><rect x="10.3" y="18.3" width="2" height="2"/><path d="M14 11.5 L17.5 15 L14 18.5 Z"/><rect x="19" y="10.3" width="6.2" height="9.6"/></g><text x="38" y="20.4" text-anchor="start" class="lbl">join 2</text><rect x="-5" y="10" width="10" height="10" rx="3" ry="3" class="port"/><rect x="95" y="10" width="10" height="10" rx="3" ry="3" class="port"/></g><g transform="translate(40,465)"><rect width="200" height="30" rx="5" ry="5" fill="#e9967a" stroke="#999"/><path d="M5 0.5 H30 V29.5 H5 A4.5 4.5 0 0 1 0.5 25 V5 A4.5 4.5 0 0 1 5 0.5 Z" fill="#000" fill-opacity="0.05"/><path d="M30 1 V29" stroke="#000" stroke-opacity="0.1"/><circle cx="15" cy="15" r="8.6" fill="#fff"/><polygon points="15,7.7 17.6,10.5 21.32,11.35 20.2,15 21.32,18.65 17.6,19.5 15,22.3 12.4,19.5 8.68,18.65 9.8,15 8.68,11.35 12.4,10.5" fill="#f5a80e"/><g stroke="#98a418" stroke-width="1.2"><line x1="15" y1="9" x2="15" y2="21"/><line x1="20.2" y1="12" x2="9.8" y2="18"/><line x1="20.2" y1="18" x2="9.8" y2="12"/></g><circle cx="15" cy="9.3" r="0.95" fill="#4f8f2e" stroke="#d0701a" stroke-width="0.4"/><circle cx="19.94" cy="12.15" r="0.95" fill="#4f8f2e" stroke="#d0701a" stroke-width="0.4"/><circle cx="19.94" cy="17.85" r="0.95" fill="#4f8f2e" stroke="#d0701a" stroke-width="0.4"/><circle cx="15" cy="20.7" r="0.95" fill="#4f8f2e" stroke="#d0701a" stroke-width="0.4"/><circle cx="10.06" cy="17.85" r="0.95" fill="#4f8f2e" stroke="#d0701a" stroke-width="0.4"/><circle cx="10.06" cy="12.15" r="0.95" fill="#4f8f2e" stroke="#d0701a" stroke-width="0.4"/><text x="38" y="20.4" text-anchor="start" class="lbl">READ: FC3, Address 6</text><rect x="-5" y="10" width="10" height="10" rx="3" ry="3" class="port"/><rect x="195" y="3.5" width="10" height="10" rx="3" ry="3" class="port"/><rect x="195" y="16.5" width="10" height="10" rx="3" ry="3" class="port"/><g transform="translate(3,33)"><rect x="3" y="-1" width="49.35" height="12" fill="#fff"/><rect x="6" y="1" width="9" height="9" rx="2" ry="2" fill="#fff" stroke="#55aa88" stroke-width="3"/><text x="20" y="10" class="st">active</text></g></g><g transform="translate(300,465)"><rect width="140" height="30" rx="5" ry="5" fill="#e2d96e" stroke="#999"/><path d="M5 0.5 H30 V29.5 H5 A4.5 4.5 0 0 1 0.5 25 V5 A4.5 4.5 0 0 1 5 0.5 Z" fill="#000" fill-opacity="0.05"/><path d="M30 1 V29" stroke="#000" stroke-opacity="0.1"/><g fill="none" stroke="#fff" stroke-width="1.8"><path d="M7 7.6 H9.6 C10.5 7.6 10.9 8 11.3 8.8 L16.2 20 C16.7 21.3 17.3 21.9 18.8 21.9"/><path d="M7 21.9 H9.6 C10.5 21.9 10.9 21.5 11.3 20.7 L16.2 9.5 C16.7 8.2 17.3 7.6 18.8 7.6"/></g><g fill="#fff"><path d="M18.2 3.6 L22.3 7.6 L18.2 11.6 Z"/><path d="M18.2 17.9 L22.3 21.9 L18.2 25.9 Z"/></g><text x="38" y="20.4" text-anchor="start" class="lbl">set msg.topic</text><rect x="-5" y="10" width="10" height="10" rx="3" ry="3" class="port"/><rect x="135" y="10" width="10" height="10" rx="3" ry="3" class="port"/></g><g transform="translate(520,465)"><rect width="160" height="30" rx="5" ry="5" fill="#fdd0a2" stroke="#999"/><path d="M5 0.5 H30 V29.5 H5 A4.5 4.5 0 0 1 0.5 25 V5 A4.5 4.5 0 0 1 5 0.5 Z" fill="#000" fill-opacity="0.05"/><path d="M30 1 V29" stroke="#000" stroke-opacity="0.1"/><g fill="none" stroke="#fff" stroke-width="1.9" stroke-linecap="round"><path d="M21.5 6.5 C20.5 4.2 16.6 4.2 16 8.5 L13.8 21.5 C13.2 25.8 9.8 25.8 8.6 23.5"/><path d="M10 15.2 H19.8"/></g><text x="38" y="20.4" text-anchor="start" class="lbl" font-style="italic">to UINT32 / 100</text><rect x="-5" y="10" width="10" height="10" rx="3" ry="3" class="port"/><rect x="155" y="10" width="10" height="10" rx="3" ry="3" class="port"/></g><g transform="translate(720,425)"><g transform="translate(114,2)"><rect width="32" height="26" rx="5" ry="5" fill="#eaecf7" stroke="#999"/><rect x="11" y="4" width="16" height="18" rx="3" ry="3" fill="#87a980" stroke="#999" stroke-opacity="0.5"/></g><rect width="120" height="30" rx="5" ry="5" fill="#87a980" stroke="#999"/><path d="M90 0.5 H115 A4.5 4.5 0 0 1 119.5 5 V25 A4.5 4.5 0 0 1 115 29.5 H90 Z" fill="#000" fill-opacity="0.05"/><path d="M90 1 V29" stroke="#000" stroke-opacity="0.1"/><g transform="translate(90,0)"><g fill="#fff"><rect x="10" y="6.6" width="10" height="2.1"/><rect x="10" y="10.6" width="10" height="2.1"/><rect x="10" y="14.6" width="10" height="2.1"/><rect x="10" y="18.6" width="10" height="2.1"/><rect x="10" y="22.6" width="10" height="2.1"/></g></g><text x="82" y="20.4" text-anchor="end" class="lbl" font-style="italic">Reg 5,6</text><rect x="-5" y="10" width="10" height="10" rx="3" ry="3" class="port"/></g><g transform="translate(720,465)"><rect width="280" height="30" rx="5" ry="5" fill="#d8bfd8" stroke="#999"/><path d="M250 0.5 H275 A4.5 4.5 0 0 1 279.5 5 V25 A4.5 4.5 0 0 1 275 29.5 H250 Z" fill="#000" fill-opacity="0.05"/><path d="M250 1 V29" stroke="#000" stroke-opacity="0.1"/><g transform="translate(250,0)"><g fill="none" stroke="#fff" stroke-width="1.5" stroke-linecap="round"><path d="M10.3 11.8 Q12.2 14.75 10.3 17.7"/><path d="M12.7 8 Q17.1 15 12.7 22"/><path d="M15 3.3 Q21.5 14.75 15 26.2"/></g></g><text x="242" y="20.4" text-anchor="end" class="lbl">machine/1/metrics/productiontime</text><rect x="-5" y="10" width="10" height="10" rx="3" ry="3" class="port"/><g transform="translate(3,33)"><rect x="3" y="-1" width="73.38" height="12" fill="#fff"/><rect x="6" y="1" width="9" height="9" rx="2" ry="2" fill="#55aa88" stroke="#55aa88" stroke-width="3"/><text x="20" y="10" class="st">connected</text></g></g><g transform="translate(40,525)"><rect width="200" height="30" rx="5" ry="5" fill="#e9967a" stroke="#999"/><path d="M5 0.5 H30 V29.5 H5 A4.5 4.5 0 0 1 0.5 25 V5 A4.5 4.5 0 0 1 5 0.5 Z" fill="#000" fill-opacity="0.05"/><path d="M30 1 V29" stroke="#000" stroke-opacity="0.1"/><circle cx="15" cy="15" r="8.6" fill="#fff"/><polygon points="15,7.7 17.6,10.5 21.32,11.35 20.2,15 21.32,18.65 17.6,19.5 15,22.3 12.4,19.5 8.68,18.65 9.8,15 8.68,11.35 12.4,10.5" fill="#f5a80e"/><g stroke="#98a418" stroke-width="1.2"><line x1="15" y1="9" x2="15" y2="21"/><line x1="20.2" y1="12" x2="9.8" y2="18"/><line x1="20.2" y1="18" x2="9.8" y2="12"/></g><circle cx="15" cy="9.3" r="0.95" fill="#4f8f2e" stroke="#d0701a" stroke-width="0.4"/><circle cx="19.94" cy="12.15" r="0.95" fill="#4f8f2e" stroke="#d0701a" stroke-width="0.4"/><circle cx="19.94" cy="17.85" r="0.95" fill="#4f8f2e" stroke="#d0701a" stroke-width="0.4"/><circle cx="15" cy="20.7" r="0.95" fill="#4f8f2e" stroke="#d0701a" stroke-width="0.4"/><circle cx="10.06" cy="17.85" r="0.95" fill="#4f8f2e" stroke="#d0701a" stroke-width="0.4"/><circle cx="10.06" cy="12.15" r="0.95" fill="#4f8f2e" stroke="#d0701a" stroke-width="0.4"/><text x="38" y="20.4" text-anchor="start" class="lbl">READ: FC3, Address 7</text><rect x="-5" y="10" width="10" height="10" rx="3" ry="3" class="port"/><rect x="195" y="3.5" width="10" height="10" rx="3" ry="3" class="port"/><rect x="195" y="16.5" width="10" height="10" rx="3" ry="3" class="port"/><g transform="translate(3,33)"><rect x="3" y="-1" width="49.35" height="12" fill="#fff"/><rect x="6" y="1" width="9" height="9" rx="2" ry="2" fill="#fff" stroke="#55aa88" stroke-width="3"/><text x="20" y="10" class="st">active</text></g></g><g transform="translate(300,525)"><rect width="140" height="30" rx="5" ry="5" fill="#e2d96e" stroke="#999"/><path d="M5 0.5 H30 V29.5 H5 A4.5 4.5 0 0 1 0.5 25 V5 A4.5 4.5 0 0 1 5 0.5 Z" fill="#000" fill-opacity="0.05"/><path d="M30 1 V29" stroke="#000" stroke-opacity="0.1"/><g fill="none" stroke="#fff" stroke-width="1.8"><path d="M7 7.6 H9.6 C10.5 7.6 10.9 8 11.3 8.8 L16.2 20 C16.7 21.3 17.3 21.9 18.8 21.9"/><path d="M7 21.9 H9.6 C10.5 21.9 10.9 21.5 11.3 20.7 L16.2 9.5 C16.7 8.2 17.3 7.6 18.8 7.6"/></g><g fill="#fff"><path d="M18.2 3.6 L22.3 7.6 L18.2 11.6 Z"/><path d="M18.2 17.9 L22.3 21.9 L18.2 25.9 Z"/></g><text x="38" y="20.4" text-anchor="start" class="lbl">set msg.topic</text><rect x="-5" y="10" width="10" height="10" rx="3" ry="3" class="port"/><rect x="135" y="10" width="10" height="10" rx="3" ry="3" class="port"/></g><g transform="translate(480,525)"><rect width="100" height="30" rx="5" ry="5" fill="#e2d96e" stroke="#999"/><path d="M5 0.5 H30 V29.5 H5 A4.5 4.5 0 0 1 0.5 25 V5 A4.5 4.5 0 0 1 5 0.5 Z" fill="#000" fill-opacity="0.05"/><path d="M30 1 V29" stroke="#000" stroke-opacity="0.1"/><g fill="#fff"><rect x="6.8" y="10.5" width="2" height="2"/><rect x="6.8" y="14.4" width="2" height="2"/><rect x="6.8" y="18.3" width="2" height="2"/><rect x="10.3" y="10.5" width="2" height="2"/><rect x="10.3" y="14.4" width="2" height="2"/><rect x="10.3" y="18.3" width="2" height="2"/><path d="M14 11.5 L17.5 15 L14 18.5 Z"/><rect x="19" y="10.3" width="6.2" height="9.6"/></g><text x="38" y="20.4" text-anchor="start" class="lbl">join 2</text><rect x="-5" y="10" width="10" height="10" rx="3" ry="3" class="port"/><rect x="95" y="10" width="10" height="10" rx="3" ry="3" class="port"/></g><g transform="translate(40,585)"><rect width="200" height="30" rx="5" ry="5" fill="#e9967a" stroke="#999"/><path d="M5 0.5 H30 V29.5 H5 A4.5 4.5 0 0 1 0.5 25 V5 A4.5 4.5 0 0 1 5 0.5 Z" fill="#000" fill-opacity="0.05"/><path d="M30 1 V29" stroke="#000" stroke-opacity="0.1"/><circle cx="15" cy="15" r="8.6" fill="#fff"/><polygon points="15,7.7 17.6,10.5 21.32,11.35 20.2,15 21.32,18.65 17.6,19.5 15,22.3 12.4,19.5 8.68,18.65 9.8,15 8.68,11.35 12.4,10.5" fill="#f5a80e"/><g stroke="#98a418" stroke-width="1.2"><line x1="15" y1="9" x2="15" y2="21"/><line x1="20.2" y1="12" x2="9.8" y2="18"/><line x1="20.2" y1="18" x2="9.8" y2="12"/></g><circle cx="15" cy="9.3" r="0.95" fill="#4f8f2e" stroke="#d0701a" stroke-width="0.4"/><circle cx="19.94" cy="12.15" r="0.95" fill="#4f8f2e" stroke="#d0701a" stroke-width="0.4"/><circle cx="19.94" cy="17.85" r="0.95" fill="#4f8f2e" stroke="#d0701a" stroke-width="0.4"/><circle cx="15" cy="20.7" r="0.95" fill="#4f8f2e" stroke="#d0701a" stroke-width="0.4"/><circle cx="10.06" cy="17.85" r="0.95" fill="#4f8f2e" stroke="#d0701a" stroke-width="0.4"/><circle cx="10.06" cy="12.15" r="0.95" fill="#4f8f2e" stroke="#d0701a" stroke-width="0.4"/><text x="38" y="20.4" text-anchor="start" class="lbl">READ: FC3, Address 8</text><rect x="-5" y="10" width="10" height="10" rx="3" ry="3" class="port"/><rect x="195" y="3.5" width="10" height="10" rx="3" ry="3" class="port"/><rect x="195" y="16.5" width="10" height="10" rx="3" ry="3" class="port"/><g transform="translate(3,33)"><rect x="3" y="-1" width="49.35" height="12" fill="#fff"/><rect x="6" y="1" width="9" height="9" rx="2" ry="2" fill="#fff" stroke="#55aa88" stroke-width="3"/><text x="20" y="10" class="st">active</text></g></g><g transform="translate(300,585)"><rect width="140" height="30" rx="5" ry="5" fill="#e2d96e" stroke="#999"/><path d="M5 0.5 H30 V29.5 H5 A4.5 4.5 0 0 1 0.5 25 V5 A4.5 4.5 0 0 1 5 0.5 Z" fill="#000" fill-opacity="0.05"/><path d="M30 1 V29" stroke="#000" stroke-opacity="0.1"/><g fill="none" stroke="#fff" stroke-width="1.8"><path d="M7 7.6 H9.6 C10.5 7.6 10.9 8 11.3 8.8 L16.2 20 C16.7 21.3 17.3 21.9 18.8 21.9"/><path d="M7 21.9 H9.6 C10.5 21.9 10.9 21.5 11.3 20.7 L16.2 9.5 C16.7 8.2 17.3 7.6 18.8 7.6"/></g><g fill="#fff"><path d="M18.2 3.6 L22.3 7.6 L18.2 11.6 Z"/><path d="M18.2 17.9 L22.3 21.9 L18.2 25.9 Z"/></g><text x="38" y="20.4" text-anchor="start" class="lbl">set msg.topic</text><rect x="-5" y="10" width="10" height="10" rx="3" ry="3" class="port"/><rect x="135" y="10" width="10" height="10" rx="3" ry="3" class="port"/></g><g transform="translate(520,585)"><rect width="160" height="30" rx="5" ry="5" fill="#fdd0a2" stroke="#999"/><path d="M5 0.5 H30 V29.5 H5 A4.5 4.5 0 0 1 0.5 25 V5 A4.5 4.5 0 0 1 5 0.5 Z" fill="#000" fill-opacity="0.05"/><path d="M30 1 V29" stroke="#000" stroke-opacity="0.1"/><g fill="none" stroke="#fff" stroke-width="1.9" stroke-linecap="round"><path d="M21.5 6.5 C20.5 4.2 16.6 4.2 16 8.5 L13.8 21.5 C13.2 25.8 9.8 25.8 8.6 23.5"/><path d="M10 15.2 H19.8"/></g><text x="38" y="20.4" text-anchor="start" class="lbl" font-style="italic">to UINT32 / 100</text><rect x="-5" y="10" width="10" height="10" rx="3" ry="3" class="port"/><rect x="155" y="10" width="10" height="10" rx="3" ry="3" class="port"/></g><g transform="translate(720,545)"><g transform="translate(114,2)"><rect width="32" height="26" rx="5" ry="5" fill="#eaecf7" stroke="#999"/><rect x="11" y="4" width="16" height="18" rx="3" ry="3" fill="#87a980" stroke="#999" stroke-opacity="0.5"/></g><rect width="120" height="30" rx="5" ry="5" fill="#87a980" stroke="#999"/><path d="M90 0.5 H115 A4.5 4.5 0 0 1 119.5 5 V25 A4.5 4.5 0 0 1 115 29.5 H90 Z" fill="#000" fill-opacity="0.05"/><path d="M90 1 V29" stroke="#000" stroke-opacity="0.1"/><g transform="translate(90,0)"><g fill="#fff"><rect x="10" y="6.6" width="10" height="2.1"/><rect x="10" y="10.6" width="10" height="2.1"/><rect x="10" y="14.6" width="10" height="2.1"/><rect x="10" y="18.6" width="10" height="2.1"/><rect x="10" y="22.6" width="10" height="2.1"/></g></g><text x="82" y="20.4" text-anchor="end" class="lbl" font-style="italic">Reg 7,8</text><rect x="-5" y="10" width="10" height="10" rx="3" ry="3" class="port"/></g><g transform="translate(720,585)"><rect width="240" height="30" rx="5" ry="5" fill="#d8bfd8" stroke="#999"/><path d="M210 0.5 H235 A4.5 4.5 0 0 1 239.5 5 V25 A4.5 4.5 0 0 1 235 29.5 H210 Z" fill="#000" fill-opacity="0.05"/><path d="M210 1 V29" stroke="#000" stroke-opacity="0.1"/><g transform="translate(210,0)"><g fill="none" stroke="#fff" stroke-width="1.5" stroke-linecap="round"><path d="M10.3 11.8 Q12.2 14.75 10.3 17.7"/><path d="M12.7 8 Q17.1 15 12.7 22"/><path d="M15 3.3 Q21.5 14.75 15 26.2"/></g></g><text x="202" y="20.4" text-anchor="end" class="lbl">machine/1/metrics/runtime</text><rect x="-5" y="10" width="10" height="10" rx="3" ry="3" class="port"/><g transform="translate(3,33)"><rect x="3" y="-1" width="73.38" height="12" fill="#fff"/><rect x="6" y="1" width="9" height="9" rx="2" ry="2" fill="#55aa88" stroke="#55aa88" stroke-width="3"/><text x="20" y="10" class="st">connected</text></g></g><g transform="translate(40,645)"><rect width="200" height="30" rx="5" ry="5" fill="#e9967a" stroke="#999"/><path d="M5 0.5 H30 V29.5 H5 A4.5 4.5 0 0 1 0.5 25 V5 A4.5 4.5 0 0 1 5 0.5 Z" fill="#000" fill-opacity="0.05"/><path d="M30 1 V29" stroke="#000" stroke-opacity="0.1"/><circle cx="15" cy="15" r="8.6" fill="#fff"/><polygon points="15,7.7 17.6,10.5 21.32,11.35 20.2,15 21.32,18.65 17.6,19.5 15,22.3 12.4,19.5 8.68,18.65 9.8,15 8.68,11.35 12.4,10.5" fill="#f5a80e"/><g stroke="#98a418" stroke-width="1.2"><line x1="15" y1="9" x2="15" y2="21"/><line x1="20.2" y1="12" x2="9.8" y2="18"/><line x1="20.2" y1="18" x2="9.8" y2="12"/></g><circle cx="15" cy="9.3" r="0.95" fill="#4f8f2e" stroke="#d0701a" stroke-width="0.4"/><circle cx="19.94" cy="12.15" r="0.95" fill="#4f8f2e" stroke="#d0701a" stroke-width="0.4"/><circle cx="19.94" cy="17.85" r="0.95" fill="#4f8f2e" stroke="#d0701a" stroke-width="0.4"/><circle cx="15" cy="20.7" r="0.95" fill="#4f8f2e" stroke="#d0701a" stroke-width="0.4"/><circle cx="10.06" cy="17.85" r="0.95" fill="#4f8f2e" stroke="#d0701a" stroke-width="0.4"/><circle cx="10.06" cy="12.15" r="0.95" fill="#4f8f2e" stroke="#d0701a" stroke-width="0.4"/><text x="38" y="20.4" text-anchor="start" class="lbl">READ: FC3, Address 9</text><rect x="-5" y="10" width="10" height="10" rx="3" ry="3" class="port"/><rect x="195" y="3.5" width="10" height="10" rx="3" ry="3" class="port"/><rect x="195" y="16.5" width="10" height="10" rx="3" ry="3" class="port"/><g transform="translate(3,33)"><rect x="3" y="-1" width="49.35" height="12" fill="#fff"/><rect x="6" y="1" width="9" height="9" rx="2" ry="2" fill="#fff" stroke="#55aa88" stroke-width="3"/><text x="20" y="10" class="st">active</text></g></g><g transform="translate(300,645)"><rect width="140" height="30" rx="5" ry="5" fill="#e2d96e" stroke="#999"/><path d="M5 0.5 H30 V29.5 H5 A4.5 4.5 0 0 1 0.5 25 V5 A4.5 4.5 0 0 1 5 0.5 Z" fill="#000" fill-opacity="0.05"/><path d="M30 1 V29" stroke="#000" stroke-opacity="0.1"/><g fill="none" stroke="#fff" stroke-width="1.8"><path d="M7 7.6 H9.6 C10.5 7.6 10.9 8 11.3 8.8 L16.2 20 C16.7 21.3 17.3 21.9 18.8 21.9"/><path d="M7 21.9 H9.6 C10.5 21.9 10.9 21.5 11.3 20.7 L16.2 9.5 C16.7 8.2 17.3 7.6 18.8 7.6"/></g><g fill="#fff"><path d="M18.2 3.6 L22.3 7.6 L18.2 11.6 Z"/><path d="M18.2 17.9 L22.3 21.9 L18.2 25.9 Z"/></g><text x="38" y="20.4" text-anchor="start" class="lbl">set msg.topic</text><rect x="-5" y="10" width="10" height="10" rx="3" ry="3" class="port"/><rect x="135" y="10" width="10" height="10" rx="3" ry="3" class="port"/></g><g transform="translate(480,645)"><rect width="100" height="30" rx="5" ry="5" fill="#e2d96e" stroke="#999"/><path d="M5 0.5 H30 V29.5 H5 A4.5 4.5 0 0 1 0.5 25 V5 A4.5 4.5 0 0 1 5 0.5 Z" fill="#000" fill-opacity="0.05"/><path d="M30 1 V29" stroke="#000" stroke-opacity="0.1"/><g fill="#fff"><rect x="6.8" y="10.5" width="2" height="2"/><rect x="6.8" y="14.4" width="2" height="2"/><rect x="6.8" y="18.3" width="2" height="2"/><rect x="10.3" y="10.5" width="2" height="2"/><rect x="10.3" y="14.4" width="2" height="2"/><rect x="10.3" y="18.3" width="2" height="2"/><path d="M14 11.5 L17.5 15 L14 18.5 Z"/><rect x="19" y="10.3" width="6.2" height="9.6"/></g><text x="38" y="20.4" text-anchor="start" class="lbl">join 2</text><rect x="-5" y="10" width="10" height="10" rx="3" ry="3" class="port"/><rect x="95" y="10" width="10" height="10" rx="3" ry="3" class="port"/></g><g transform="translate(40,705)"><rect width="220" height="30" rx="5" ry="5" fill="#e9967a" stroke="#999"/><path d="M5 0.5 H30 V29.5 H5 A4.5 4.5 0 0 1 0.5 25 V5 A4.5 4.5 0 0 1 5 0.5 Z" fill="#000" fill-opacity="0.05"/><path d="M30 1 V29" stroke="#000" stroke-opacity="0.1"/><circle cx="15" cy="15" r="8.6" fill="#fff"/><polygon points="15,7.7 17.6,10.5 21.32,11.35 20.2,15 21.32,18.65 17.6,19.5 15,22.3 12.4,19.5 8.68,18.65 9.8,15 8.68,11.35 12.4,10.5" fill="#f5a80e"/><g stroke="#98a418" stroke-width="1.2"><line x1="15" y1="9" x2="15" y2="21"/><line x1="20.2" y1="12" x2="9.8" y2="18"/><line x1="20.2" y1="18" x2="9.8" y2="12"/></g><circle cx="15" cy="9.3" r="0.95" fill="#4f8f2e" stroke="#d0701a" stroke-width="0.4"/><circle cx="19.94" cy="12.15" r="0.95" fill="#4f8f2e" stroke="#d0701a" stroke-width="0.4"/><circle cx="19.94" cy="17.85" r="0.95" fill="#4f8f2e" stroke="#d0701a" stroke-width="0.4"/><circle cx="15" cy="20.7" r="0.95" fill="#4f8f2e" stroke="#d0701a" stroke-width="0.4"/><circle cx="10.06" cy="17.85" r="0.95" fill="#4f8f2e" stroke="#d0701a" stroke-width="0.4"/><circle cx="10.06" cy="12.15" r="0.95" fill="#4f8f2e" stroke="#d0701a" stroke-width="0.4"/><text x="38" y="20.4" text-anchor="start" class="lbl">READ: FC3, Address 10</text><rect x="-5" y="10" width="10" height="10" rx="3" ry="3" class="port"/><rect x="215" y="3.5" width="10" height="10" rx="3" ry="3" class="port"/><rect x="215" y="16.5" width="10" height="10" rx="3" ry="3" class="port"/><g transform="translate(3,33)"><rect x="3" y="-1" width="49.35" height="12" fill="#fff"/><rect x="6" y="1" width="9" height="9" rx="2" ry="2" fill="#fff" stroke="#55aa88" stroke-width="3"/><text x="20" y="10" class="st">active</text></g></g><g transform="translate(300,705)"><rect width="140" height="30" rx="5" ry="5" fill="#e2d96e" stroke="#999"/><path d="M5 0.5 H30 V29.5 H5 A4.5 4.5 0 0 1 0.5 25 V5 A4.5 4.5 0 0 1 5 0.5 Z" fill="#000" fill-opacity="0.05"/><path d="M30 1 V29" stroke="#000" stroke-opacity="0.1"/><g fill="none" stroke="#fff" stroke-width="1.8"><path d="M7 7.6 H9.6 C10.5 7.6 10.9 8 11.3 8.8 L16.2 20 C16.7 21.3 17.3 21.9 18.8 21.9"/><path d="M7 21.9 H9.6 C10.5 21.9 10.9 21.5 11.3 20.7 L16.2 9.5 C16.7 8.2 17.3 7.6 18.8 7.6"/></g><g fill="#fff"><path d="M18.2 3.6 L22.3 7.6 L18.2 11.6 Z"/><path d="M18.2 17.9 L22.3 21.9 L18.2 25.9 Z"/></g><text x="38" y="20.4" text-anchor="start" class="lbl">set msg.topic</text><rect x="-5" y="10" width="10" height="10" rx="3" ry="3" class="port"/><rect x="135" y="10" width="10" height="10" rx="3" ry="3" class="port"/></g><g transform="translate(520,705)"><rect width="160" height="30" rx="5" ry="5" fill="#fdd0a2" stroke="#999"/><path d="M5 0.5 H30 V29.5 H5 A4.5 4.5 0 0 1 0.5 25 V5 A4.5 4.5 0 0 1 5 0.5 Z" fill="#000" fill-opacity="0.05"/><path d="M30 1 V29" stroke="#000" stroke-opacity="0.1"/><g fill="none" stroke="#fff" stroke-width="1.9" stroke-linecap="round"><path d="M21.5 6.5 C20.5 4.2 16.6 4.2 16 8.5 L13.8 21.5 C13.2 25.8 9.8 25.8 8.6 23.5"/><path d="M10 15.2 H19.8"/></g><text x="38" y="20.4" text-anchor="start" class="lbl" font-style="italic">to UINT32 / 100</text><rect x="-5" y="10" width="10" height="10" rx="3" ry="3" class="port"/><rect x="155" y="10" width="10" height="10" rx="3" ry="3" class="port"/></g><g transform="translate(720,665)"><g transform="translate(114,2)"><rect width="32" height="26" rx="5" ry="5" fill="#eaecf7" stroke="#999"/><rect x="11" y="4" width="16" height="18" rx="3" ry="3" fill="#87a980" stroke="#999" stroke-opacity="0.5"/></g><rect width="120" height="30" rx="5" ry="5" fill="#87a980" stroke="#999"/><path d="M90 0.5 H115 A4.5 4.5 0 0 1 119.5 5 V25 A4.5 4.5 0 0 1 115 29.5 H90 Z" fill="#000" fill-opacity="0.05"/><path d="M90 1 V29" stroke="#000" stroke-opacity="0.1"/><g transform="translate(90,0)"><g fill="#fff"><rect x="10" y="6.6" width="10" height="2.1"/><rect x="10" y="10.6" width="10" height="2.1"/><rect x="10" y="14.6" width="10" height="2.1"/><rect x="10" y="18.6" width="10" height="2.1"/><rect x="10" y="22.6" width="10" height="2.1"/></g></g><text x="82" y="20.4" text-anchor="end" class="lbl" font-style="italic">Reg 9,10</text><rect x="-5" y="10" width="10" height="10" rx="3" ry="3" class="port"/></g><g transform="translate(720,705)"><rect width="240" height="30" rx="5" ry="5" fill="#d8bfd8" stroke="#999"/><path d="M210 0.5 H235 A4.5 4.5 0 0 1 239.5 5 V25 A4.5 4.5 0 0 1 235 29.5 H210 Z" fill="#000" fill-opacity="0.05"/><path d="M210 1 V29" stroke="#000" stroke-opacity="0.1"/><g transform="translate(210,0)"><g fill="none" stroke="#fff" stroke-width="1.5" stroke-linecap="round"><path d="M10.3 11.8 Q12.2 14.75 10.3 17.7"/><path d="M12.7 8 Q17.1 15 12.7 22"/><path d="M15 3.3 Q21.5 14.75 15 26.2"/></g></g><text x="202" y="20.4" text-anchor="end" class="lbl">machine/1/metrics/stoptime</text><rect x="-5" y="10" width="10" height="10" rx="3" ry="3" class="port"/><g transform="translate(3,33)"><rect x="3" y="-1" width="73.38" height="12" fill="#fff"/><rect x="6" y="1" width="9" height="9" rx="2" ry="2" fill="#55aa88" stroke="#55aa88" stroke-width="3"/><text x="20" y="10" class="st">connected</text></g></g><g transform="translate(720,765)"><rect width="120" height="30" rx="5" ry="5" fill="#dbe8a4" stroke="#999"/><path d="M5 0.5 H30 V29.5 H5 A4.5 4.5 0 0 1 0.5 25 V5 A4.5 4.5 0 0 1 5 0.5 Z" fill="#000" fill-opacity="0.05"/><path d="M30 1 V29" stroke="#000" stroke-opacity="0.1"/><g fill="none" stroke="#fff" stroke-width="1.3"><path d="M17.06 6.55 A8.5 8.5 0 1 1 9.77 8.1"/><path d="M15 14.8 L9.6 9.2" stroke-width="1.3"/></g><circle cx="15" cy="6.5" r="1.5" fill="#fff"/><circle cx="15" cy="14.8" r="1.4" fill="#fff"/><text x="38" y="20.4" text-anchor="start" class="lbl">flow-timer</text><rect x="-5" y="10" width="10" height="10" rx="3" ry="3" class="port"/><rect x="115" y="10" width="10" height="10" rx="3" ry="3" class="port"/><g transform="translate(3,33)"><rect x="0" y="-1" width="99.72" height="12" fill="#fff"/><text x="3" y="10" class="st">10POLLS: 320ms</text></g></g></g></g>
</svg>
<div id="vtrack"></div>
<div id="vthumb"></div>
<div id="sbline2"></div>
<div id="sep"></div>
<div id="sbhandle"></div>
<div id="sbline"></div>
<div id="sidebar"></div>
<div id="sbtabs"></div>
<div id="dbgtab">
  <svg style="position:absolute;left:12px;top:7px" width="14" height="14" viewBox="0 0 14 14"><g fill="#8a8d96"><ellipse cx="7" cy="8.5" rx="3.6" ry="4.5"/><rect x="5" y="1.5" width="4" height="3" rx="1.5"/></g><g stroke="#8a8d96" stroke-width="1.2"><path d="M1 5 L3.5 6.5 M13 5 L10.5 6.5 M0.5 9 H3.5 M13.5 9 H10.5 M1 13 L3.5 11.5 M13 13 L10.5 11.5"/></g><path d="M7 5 V13" stroke="#fff" stroke-width="0.8"/></svg>
  <span>debug</span>
</div>
<div id="dbgbtn">
  <svg style="position:absolute;left:6px;top:5.5px" width="14" height="14" viewBox="0 0 14 14"><g fill="#555b66"><ellipse cx="7" cy="8.5" rx="3.6" ry="4.5"/><rect x="5" y="1.5" width="4" height="3" rx="1.5"/></g><g stroke="#555b66" stroke-width="1.2"><path d="M1 5 L3.5 6.5 M13 5 L10.5 6.5 M0.5 9 H3.5 M13.5 9 H10.5 M1 13 L3.5 11.5 M13 13 L10.5 11.5"/></g><path d="M7 5 V13" stroke="#e4e6f3" stroke-width="0.8"/></svg>
</div>
<svg style="position:absolute;left:1008px;top:77px" width="10" height="6"><path d="M0 0 H9 L4.5 5 Z" fill="#7b7d88"/></svg>
<div id="sbtool"></div>
<div style="position:absolute;left:1029px;top:60px;width:1px;height:624px;background:#b3b4c0"></div>
<div class="sbb" style="left:842px;width:97px">
  <svg style="position:absolute;left:8px;top:6px" width="11" height="12"><path d="M0 0 H10 L6.5 5 V12 L3.5 10 V5 Z" fill="#6a6e77"/></svg>
  <span style="left:21.5px">all nodes</span>
  <svg style="position:absolute;left:81px;top:10px" width="10" height="6"><path d="M0 0 H9 L4.5 5 Z" fill="#777"/></svg>
</div>
<div class="sbb" style="left:949px;width:60px">
  <svg style="position:absolute;left:8px;top:6px" width="10" height="12"><path d="M0 1.5 H10 M3.5 1.5 V0 H6.5 V1.5" stroke="#666a73" stroke-width="1.2" fill="none"/><path d="M1 3 H9 L8.3 12 H1.7 Z" fill="#666a73"/><path d="M3.5 4.5 V10.5 M5 4.5 V10.5 M6.5 4.5 V10.5" stroke="#fff" stroke-width="0.6"/></svg>
  <span style="left:22px">all</span>
  <svg style="position:absolute;left:44.5px;top:10px" width="10" height="6"><path d="M0 0 H9 L4.5 5 Z" fill="#777"/></svg>
</div>
</body></html>
